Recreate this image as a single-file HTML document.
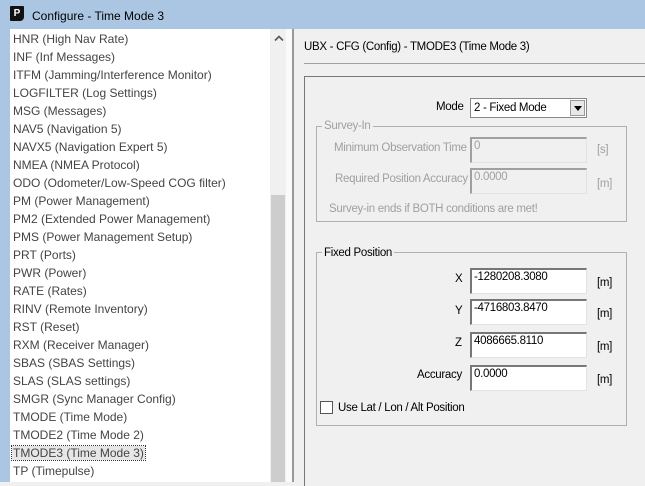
<!DOCTYPE html>
<html><head><style>
*{margin:0;padding:0;box-sizing:border-box}
body{width:645px;height:482px;overflow:hidden;background:#f0f0f0;font-family:"Liberation Sans",sans-serif;position:relative}
.a{position:absolute}
.t{font-size:12px;color:#444;white-space:nowrap}
.r{font-size:11.5px;color:#000;white-space:nowrap;letter-spacing:-0.3px}
.g{color:#a0a0a0}
.in{position:absolute;background:#fff;border-top:2px solid #777;border-left:2px solid #777;border-right:1px solid #e3e3e3;border-bottom:1px solid #e3e3e3;font-size:11.5px;padding:1px 2px;letter-spacing:-0.3px}
.dis{background:#f0f0f0;color:#a0a0a0;border-top-color:#a0a0a0;border-left-color:#a0a0a0}
.gb{position:absolute;border:1px solid #b0b0b0}
</style></head><body>
<div class="a" style="left:0;top:0;width:645px;height:29px;background:#abc6e2"></div>
<div class="a" style="left:0;top:29px;width:10px;height:453px;background:#abc6e2"></div>
<div class="a" style="left:10px;top:6px;width:14px;height:15px;background:#111;border-radius:1px 1px 4px 1px;color:#fff;font-size:10px;font-weight:bold;text-align:center;line-height:15px">P</div>
<div class="a" style="left:32px;top:9px;font-size:12px;color:#000">Configure - Time Mode 3</div>
<div class="a" style="left:10px;top:29px;width:260px;height:453px;background:#fff"></div>
<div class="a" style="left:270px;top:29px;width:16px;height:453px;background:#f0f0f0"></div>
<div class="a" style="left:271px;top:195px;width:14px;height:287px;background:#cdcdcd"></div>
<svg class="a" style="left:274px;top:35px" width="10" height="7"><path d="M1 5.5 L5 1.5 L9 5.5" fill="none" stroke="#555" stroke-width="1.6"/></svg>
<div class="a" style="left:286px;top:29px;width:6px;height:453px;background:#fafafa"></div>
<div class="a" style="left:292px;top:29px;width:2px;height:453px;background:#9a9a9a"></div>
<div class="a" style="left:13px;top:30px;line-height:18px" >
<div class="t">HNR (High Nav Rate)</div>
<div class="t">INF (Inf Messages)</div>
<div class="t">ITFM (Jamming/Interference Monitor)</div>
<div class="t">LOGFILTER (Log Settings)</div>
<div class="t">MSG (Messages)</div>
<div class="t">NAV5 (Navigation 5)</div>
<div class="t">NAVX5 (Navigation Expert 5)</div>
<div class="t">NMEA (NMEA Protocol)</div>
<div class="t">ODO (Odometer/Low-Speed COG filter)</div>
<div class="t">PM (Power Management)</div>
<div class="t">PM2 (Extended Power Management)</div>
<div class="t">PMS (Power Management Setup)</div>
<div class="t">PRT (Ports)</div>
<div class="t">PWR (Power)</div>
<div class="t">RATE (Rates)</div>
<div class="t">RINV (Remote Inventory)</div>
<div class="t">RST (Reset)</div>
<div class="t">RXM (Receiver Manager)</div>
<div class="t">SBAS (SBAS Settings)</div>
<div class="t">SLAS (SLAS settings)</div>
<div class="t">SMGR (Sync Manager Config)</div>
<div class="t">TMODE (Time Mode)</div>
<div class="t">TMODE2 (Time Mode 2)</div>
<div class="t"><span style="background:#e6e6e6;outline:1px dotted #333;padding:0 1px;margin-left:-1px">TMODE3 (Time Mode 3)</span></div>
<div class="t">TP (Timepulse)</div>
</div>
<div class="a r" style="left:304px;top:41px">UBX - CFG (Config) - TMODE3 (Time Mode 3)</div>
<div class="a" style="left:304px;top:63px;width:341px;height:1px;background:#a0a0a0"></div>
<div class="a" style="left:304px;top:76px;width:345px;height:410px;border:1px solid #777;border-right:none;border-bottom:none"></div>
<div class="a r" style="left:436px;top:101px">Mode</div>
<div class="a" style="left:470px;top:98px;width:117px;height:20px;background:#fff;border:1px solid #888;font-size:11.5px;padding:3px 3px;letter-spacing:-0.3px">2 - Fixed Mode</div>
<div class="a" style="left:570px;top:100px;width:15px;height:16px;background:#e8e8e8;border:1px solid #999"></div>
<div class="a" style="left:574px;top:106px;width:0;height:0;border-left:4px solid transparent;border-right:4px solid transparent;border-top:5px solid #000"></div>
<div class="gb" style="left:316px;top:126px;width:311px;height:96px"></div>
<div class="a r g" style="left:322px;top:120px;background:#f0f0f0;padding:0 2px">Survey-In</div>
<div class="a r g" style="left:334px;top:142px">Minimum Observation Time</div>
<div class="in dis" style="left:470px;top:137px;width:117px;height:26px">0</div>
<div class="a r g" style="left:597px;top:144px">[s]</div>
<div class="a r g" style="left:335px;top:173px">Required Position Accuracy</div>
<div class="in dis" style="left:470px;top:168px;width:117px;height:26px">0.0000</div>
<div class="a r g" style="left:597px;top:178px">[m]</div>
<div class="a r g" style="left:329px;top:203px">Survey-in ends if BOTH conditions are met!</div>
<div class="gb" style="left:316px;top:252px;width:311px;height:174px"></div>
<div class="a r" style="left:322px;top:247px;background:#f0f0f0;padding:0 2px">Fixed Position</div>
<div class="a r" style="left:455px;top:273px">X</div>
<div class="in" style="left:470px;top:268px;width:117px;height:26px">-1280208.3080</div>
<div class="a r" style="left:597px;top:277px">[m]</div>
<div class="a r" style="left:455px;top:305px">Y</div>
<div class="in" style="left:470px;top:299px;width:117px;height:26px">-4716803.8470</div>
<div class="a r" style="left:597px;top:308px">[m]</div>
<div class="a r" style="left:455px;top:337px">Z</div>
<div class="in" style="left:470px;top:332px;width:117px;height:26px">4086665.8110</div>
<div class="a r" style="left:597px;top:341px">[m]</div>
<div class="a r" style="left:417px;top:369px">Accuracy</div>
<div class="in" style="left:470px;top:365px;width:117px;height:26px">0.0000</div>
<div class="a r" style="left:597px;top:374px">[m]</div>
<div class="a" style="left:320px;top:401px;width:13px;height:13px;background:#fff;border:1px solid #555"></div>
<div class="a r" style="left:338px;top:402px">Use Lat / Lon / Alt Position</div>
</body></html>
